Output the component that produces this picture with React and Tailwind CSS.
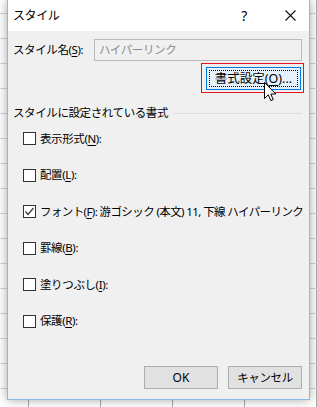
import React from "react";

const U = ({ children }) => <span className="underline underline-offset-2">{children}</span>;

function Box({ checked }) {
  return (
    <div className="w-[13px] h-[13px] border border-[#333333] bg-white flex-none flex items-center justify-center">
      {checked && (
        <svg width="11" height="11" viewBox="0 0 11 11">
          <path d="M1.5 5.5 L4 8.5 L9.5 2" fill="none" stroke="#333" strokeWidth="1.2" />
        </svg>
      )}
    </div>
  );
}

function Row({ checked, children }) {
  return (
    <div className="flex items-center h-[13px] gap-[4px]">
      <Box checked={checked} />
      <span className="leading-[16px] whitespace-nowrap">{children}</span>
    </div>
  );
}

export default function App() {
  return (
    <div
      className="relative w-[317px] h-[407px] overflow-hidden bg-white bg-[linear-gradient(#d4d4d4_1px,transparent_1px),linear-gradient(90deg,#a8a8a8_1px,transparent_1px)] bg-[size:100%_25px,72px_100%] bg-[position:0_13px,28px_0]"
      style={{ fontFamily: '"Noto Sans", "Noto Sans CJK JP", sans-serif' }}
    >
      <div className="absolute left-[7px] top-0 w-[303px] h-[400px] border-x border-b border-[#8ab8e6] bg-[#f0f0f0] shadow-[0_0_10px_rgba(0,0,0,0.35)] flex flex-col text-[11.5px] tracking-[-0.4px] text-black">
        <div className="h-[31px] bg-white flex items-center pl-[5px] pr-[13px] flex-none">
          <span className="leading-[16px] text-[12px]">スタイル</span>
          <span className="ml-auto mr-[38px] text-[14px] leading-[16px]">?</span>
          <svg width="11" height="11" viewBox="0 0 11 11">
            <path d="M0.5 0.5 L10.5 10.5 M10.5 0.5 L0.5 10.5" stroke="#111" strokeWidth="1.1" />
          </svg>
        </div>

        <div className="flex-1 flex flex-col pl-[5px] pr-[7px]">
          <div className="flex items-center h-[22px] mt-[8px]">
            <span className="w-[81px] leading-[16px] whitespace-nowrap">
              スタイル名(<U>S</U>):
            </span>
            <div className="flex-1 h-[22px] border border-[#b9b9b9] bg-[#f0f0f0] flex items-center pl-[4px] text-[#8a8a8a] leading-[16px]">
              ハイパーリンク
            </div>
          </div>

          <div className="flex justify-end mt-[2px] mr-[-2px]">
            <div className="w-[103px] h-[30px] border border-[#e81123] pl-[4px] pr-[2px] pt-[3px] pb-[2px]">
              <div className="w-full h-full border border-[#0078d7] bg-[#e5f1fb] p-[2px]">
                <div className="w-full h-full border border-dotted border-black flex items-center justify-center text-[12.5px] tracking-normal leading-[16px] whitespace-nowrap">
                  書式設定(<U>O</U>)...
                </div>
              </div>
            </div>
          </div>

          <div className="flex items-center h-[16px] mt-[12px] gap-[6px]">
            <span className="leading-[16px] whitespace-nowrap">スタイルに設定されている書式</span>
            <div className="flex-1 h-px bg-[#dcdcdc]" />
          </div>

          <div className="flex flex-col gap-[23.6px] mt-[11px] pl-[10px]">
            <Row>表示形式(<U>N</U>):</Row>
            <Row>配置(<U>L</U>):</Row>
            <Row checked>
              <span className="tracking-[-0.6px]">
                フォント(<U>F</U>): 游ゴシック (本文) 11, 下線 ハイパーリンク
              </span>
            </Row>
            <Row>罫線(<U>B</U>):</Row>
            <Row>塗りつぶし(<U>I</U>):</Row>
            <Row>保護(<U>R</U>):</Row>
          </div>

          <div className="mt-auto mb-[10px] flex justify-end gap-[10px]">
            <div className="w-[74px] h-[23px] border border-[#adadad] bg-[#e1e1e1] flex items-center justify-center leading-[16px] text-[12px] tracking-normal">
              OK
            </div>
            <div className="w-[74px] h-[23px] border border-[#adadad] bg-[#e1e1e1] flex items-center justify-center leading-[16px]">
              キャンセル
            </div>
          </div>
        </div>
      </div>

      <svg className="absolute left-[264px] top-[82px]" width="13" height="20" viewBox="0 0 13 20">
        <path
          d="M0.5 0.5 L0.5 16.5 L4.3 12.8 L6.8 18.6 L9.2 17.6 L6.8 12 L11.8 12 Z"
          fill="#fff"
          stroke="#000"
          strokeWidth="1"
          strokeLinejoin="round"
        />
      </svg>
    </div>
  );
}
